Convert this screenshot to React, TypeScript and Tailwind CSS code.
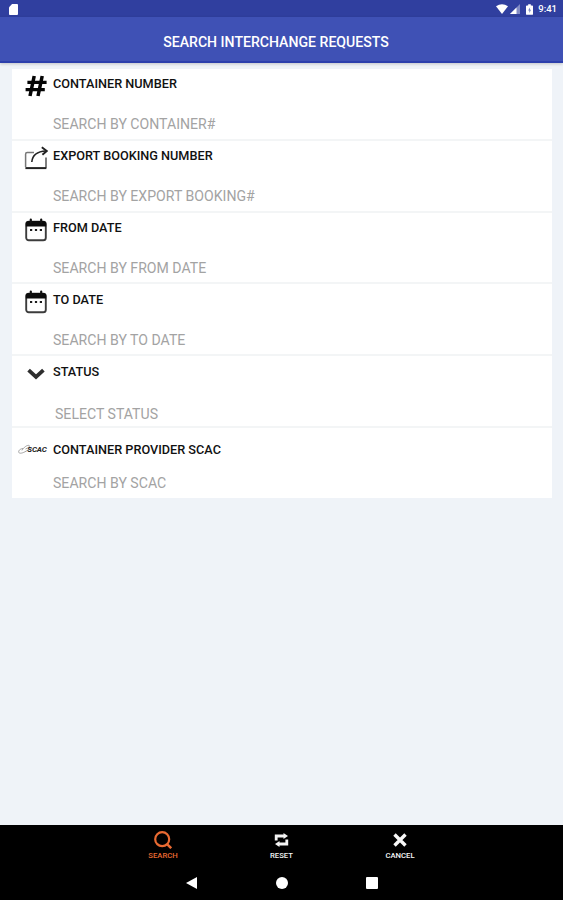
import type { ReactNode } from "react";

interface Field {
  id: string;
  label: string;
  placeholder: string;
  icon: ReactNode;
  /** Spacing overrides for rows that don't follow the common rhythm. */
  labelClass?: string;
  inputClass?: string;
}

function HashIcon() {
  return (
    <svg viewBox="0 0 22 22" className="-mt-px h-[22px] w-[22px]" fill="none" stroke="#050505">
      <path d="M9.2 1 5 21M17.2 1 13 21" strokeWidth="3.5" />
      <path d="M2.4 7.4H21.6M.6 14.6H19.8" strokeWidth="3.2" />
    </svg>
  );
}

function ExportIcon() {
  return (
    <svg viewBox="0 0 24 24" className="-ml-px h-6 w-6" fill="none" stroke="#222">
      <path d="M10 6.6H3.2Q1.6 6.6 1.6 8.2V21" strokeWidth="1.5" stroke="#777" />
      <path d="M22 11.5V21.8" strokeWidth="1.5" stroke="#555" />
      <path d="M1.4 22.1H22.4" strokeWidth="2" />
      <path d="M7.8 16C8.4 9.6 12 5.4 22 5" strokeWidth="1.6" />
      <path d="M17.8 1.2 22.8 5 18.4 8.8" strokeWidth="1.9" />
    </svg>
  );
}

function CalendarIcon() {
  return (
    <svg viewBox="0 0 22 24" className="h-6 w-[22px]" fill="none">
      <rect x="1.2" y="3.7" width="19.6" height="18.6" rx="2.6" stroke="#3c3c3c" strokeWidth="1.9" />
      <path d="M.8 8.6V5.8Q.8 3 3.6 3H18.4Q21.2 3 21.2 5.8V8.6Z" fill="#0c0c0c" />
      <path d="M5.8 1.6V4.5M16.2 1.6V4.5" stroke="#111" strokeWidth="2.2" strokeLinecap="round" />
      <path d="M5 12H7.2M9.9 12H12.1M14.8 12H17" stroke="#1c1c1c" strokeWidth="1.8" />
    </svg>
  );
}

function ChevronIcon() {
  return (
    <svg viewBox="0 0 18 12" className="mt-px h-3 w-[18px]" fill="none" stroke="#2e2e2e">
      <path d="M1.6 2.2 9 9 16.4 2.2" strokeWidth="3.8" />
    </svg>
  );
}

function ScacIcon() {
  return (
    <span className="flex items-center">
      <svg viewBox="0 0 13 12" className="-mr-1 h-3 w-[13px]" fill="none" stroke="#999" strokeWidth="0.9">
        <path d="M5 4.5C1.5 5 .2 7 .8 8.4 1.6 10 5 9 8 7.2M4 6.4C6 3 9 1 11 1.4 12.4 1.8 11 3.6 7.5 5M8 7.2 12.5 4.5" />
      </svg>
      <span className="text-[8px] leading-3 font-bold tracking-[-0.2px] text-[#222] italic">SCAC</span>
    </span>
  );
}

const FIELDS: Field[] = [
  { id: "container", label: "CONTAINER NUMBER", placeholder: "SEARCH BY CONTAINER#", icon: <HashIcon />, labelClass: "pt-[7px]", inputClass: "mt-6" },
  { id: "booking", label: "EXPORT BOOKING NUMBER", placeholder: "SEARCH BY EXPORT BOOKING#", icon: <ExportIcon /> },
  { id: "from", label: "FROM DATE", placeholder: "SEARCH BY FROM DATE", icon: <CalendarIcon /> },
  { id: "to", label: "TO DATE", placeholder: "SEARCH BY TO DATE", icon: <CalendarIcon /> },
  { id: "status", label: "STATUS", placeholder: "SELECT STATUS", icon: <ChevronIcon />, inputClass: "mt-[26.5px] ml-0.5" },
  {
    id: "scac",
    label: "CONTAINER PROVIDER SCAC",
    placeholder: "SEARCH BY SCAC",
    icon: <ScacIcon />,
    labelClass: "pt-3.5",
    inputClass: "mt-[17.5px]",
  },
];

function FieldRow({ field }: { field: Field }) {
  const isScac = field.id === "scac";
  return (
    <label
      htmlFor={field.id}
      className={`flex border-[#f3f5f6] ${isScac ? "h-[70px]" : "h-[71.8px] border-b-2"}`}
    >
      <span className={`flex w-[41px] shrink-0 justify-center ${isScac ? "pt-3.5" : "pt-[5.5px] pl-[7px]"}`}>
        <span className={`flex items-center ${isScac ? "h-4" : "h-6"}`}>{field.icon}</span>
      </span>
      <span className={`flex grow flex-col ${field.labelClass ?? "pt-[7.5px]"}`}>
        <span className="text-[12.7px] leading-4 font-medium text-[#111]">{field.label}</span>
        <input
          id={field.id}
          placeholder={field.placeholder}
          className={`h-4 text-[14.1px] leading-4 outline-none placeholder:text-[#a3a3a3] ${field.inputClass ?? "mt-[23.8px]"}`}
        />
      </span>
    </label>
  );
}

function StatusBar() {
  return (
    <div className="flex h-[17px] shrink-0 items-center bg-[#303f9f] pr-[6px] pl-[9px] text-white">
      <svg viewBox="0 0 10 12" className="mt-px h-[11px] w-[9px]" fill="currentColor">
        <path d="M3.4 0H9Q10 0 10 1V11Q10 12 9 12H1Q0 12 0 11V3.6Z" />
      </svg>
      <div className="ml-auto flex items-center">
        <svg viewBox="0 0 12 10" className="h-2.5 w-3" fill="currentColor">
          <path d="M0 2.2Q6-1.8 12 2.2L6 10Z" />
        </svg>
        <svg viewBox="0 0 10 10" className="ml-0.5 h-2.5 w-2.5" fill="currentColor">
          <path d="M0 10 10 0V10Z" opacity=".4" />
          <path d="M0 10 6.5 3.5V10Z" />
        </svg>
        <svg viewBox="0 0 8 12" className="mt-px ml-[6px] h-[11px] w-[7px]" fill="currentColor">
          <path d="M2.5 0H5.5V1.3H7Q8 1.3 8 2.3V11Q8 12 7 12H1Q0 12 0 11V2.3Q0 1.3 1 1.3H2.5Z" />
          <path d="M4.7 3.5 2.4 7.2H3.8V10L5.8 6.3H4.5Z" fill="#7580c0" />
        </svg>
        <span className="ml-[5px] pt-px text-[9.5px] leading-3 font-medium">9:41</span>
      </div>
    </div>
  );
}

const ACTIONS = [
  {
    label: "SEARCH",
    color: "text-[#e96a32]",
    icon: (
      <svg viewBox="0 0 18 18" className="h-[18px] w-[18px]" fill="none" stroke="currentColor" strokeWidth="2.2">
        <circle cx="8.2" cy="8.2" r="7" />
        <path d="M12.8 12.8 17.2 17.2" strokeWidth="2.5" />
      </svg>
    ),
  },
  {
    label: "RESET",
    color: "text-[#f4f4f4]",
    icon: (
      <svg viewBox="0 0 15 14" className="h-3.5 w-[15px]" fill="none" stroke="currentColor" strokeWidth="2.8">
        <path d="M2.2 7.5V3H10" />
        <path d="M12.8 6.5V11H5" />
        <path d="M9.5 0 14 3 9.5 6ZM5.5 8 1 11 5.5 14Z" fill="currentColor" stroke="none" />
      </svg>
    ),
  },
  {
    label: "CANCEL",
    color: "text-[#f8f8f8]",
    icon: (
      <svg viewBox="0 0 14 14" className="h-3.5 w-3.5" fill="none" stroke="currentColor" strokeWidth="3.4">
        <path d="M1.5 1.5 12.5 12.5M12.5 1.5 1.5 12.5" />
      </svg>
    ),
  },
];

export default function App() {
  return (
    <div className="flex h-[900px] w-[563px] flex-col overflow-hidden bg-[#eff3f8] font-[Roboto,sans-serif]">
      <StatusBar />
      <header className="flex h-[46px] shrink-0 items-center justify-center border-b-2 border-[#2c3fac] bg-[#3f51b5] pr-[11px] pt-1.5 shadow-[0_1px_3px_rgba(0,0,0,0.2)]">
        <h1 className="text-[14.1px] leading-5 font-medium whitespace-nowrap text-white">SEARCH INTERCHANGE REQUESTS</h1>
      </header>

      <main className="grow pt-1.5 pr-[11px] pl-3">
        <form className="bg-white">
          {FIELDS.map((f) => (
            <FieldRow key={f.id} field={f} />
          ))}
        </form>
      </main>

      <footer className="h-[75px] shrink-0 bg-black">
        <div className="flex justify-center pt-[6px]">
          {ACTIONS.map((a) => (
            <button key={a.label} type="button" className={`flex w-[118.5px] flex-col items-center ${a.color}`}>
              <span className="flex h-[18px] items-center">{a.icon}</span>
              <span className="mt-0.5 text-[7.7px] leading-[10px] font-medium">{a.label}</span>
            </button>
          ))}
        </div>
        <nav className="mt-[16px] flex justify-center">
          <span className="flex w-[90px] justify-center">
            <svg viewBox="0 0 11 12" className="h-3 w-[11px]" fill="#fff">
              <path d="M0 6 11 0V12Z" />
            </svg>
          </span>
          <span className="flex w-[90px] justify-center">
            <span className="size-3 rounded-full bg-white" />
          </span>
          <span className="flex w-[90px] justify-center">
            <span className="size-3 rounded-[1px] bg-white" />
          </span>
        </nav>
      </footer>
    </div>
  );
}
